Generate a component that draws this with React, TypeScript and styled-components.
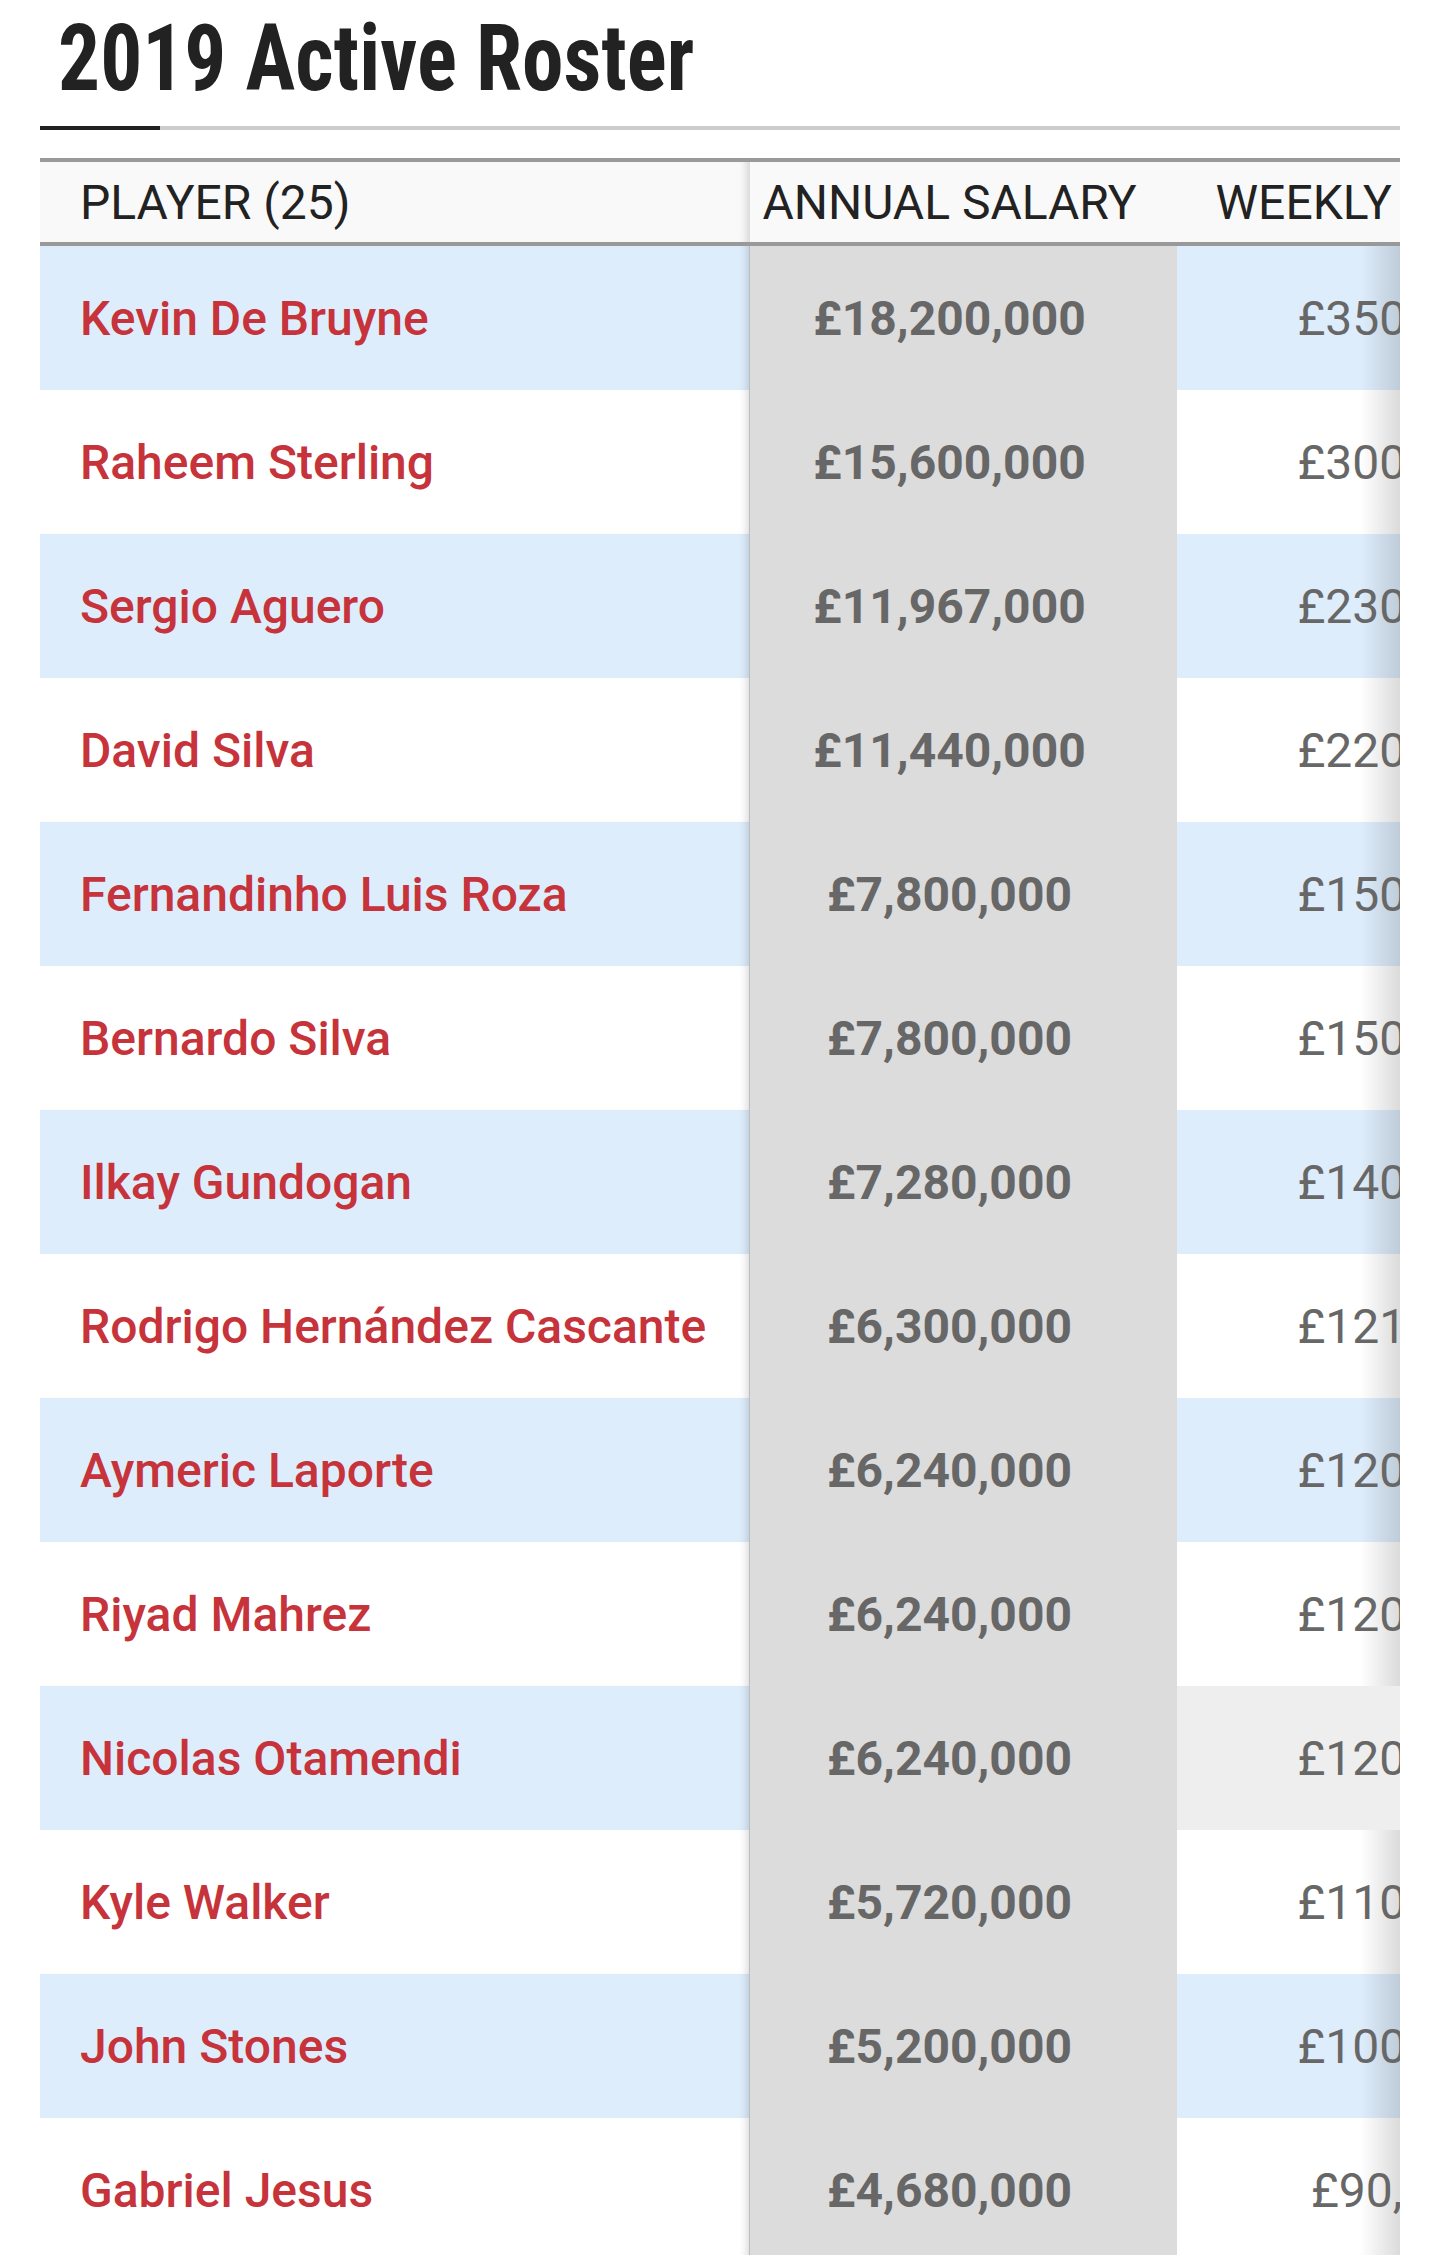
import styled, { createGlobalStyle, css } from "styled-components";

const GlobalStyle = createGlobalStyle`
  body {
    margin: 0;
    background: #fff;
    font-family: Roboto, "Liberation Sans", Arial, sans-serif;
  }
`;

const Page = styled.main`
  padding: 0 40px;
`;

const Title = styled.h1`
  display: inline-block;
  margin: 0;
  padding: 13px 0 0 20px;
  font-size: 92px;
  line-height: 92px;
  font-weight: 700;
  font-stretch: 75%;
  color: #222;
  transform: scaleX(0.905);
  transform-origin: left top;
`;

const TitleRule = styled.div`
  position: relative;
  height: 4px;
  margin-top: 21px;
  width: 1360px;
  background: #ccc;

  &::before {
    content: "";
    position: absolute;
    left: 0;
    top: 0;
    width: 120px;
    height: 4px;
    background: #222;
  }
`;

const TableWrap = styled.div`
  width: 1360px;
  margin-top: 28px;
  border-top: 4px solid #999;
  overflow: hidden;
`;

const Grid = styled.div`
  width: max-content;
`;

const COLUMNS = "709px 428px 468px";

// soft shadow along the right edge of the player column
const edgeShadow = css`
  box-shadow: inset -9px 0 8px -7px rgba(0, 0, 0, 0.16);
`;

const HeadRow = styled.div`
  display: grid;
  grid-template-columns: ${COLUMNS};
  height: 80px;
  background: #f9f9f9;
  border-bottom: 4px solid #999;
`;

const HeadCell = styled.div<{ $align?: "left" | "center"; $sorted?: boolean }>`
  display: flex;
  align-items: center;
  justify-content: ${(p) => (p.$align === "left" ? "flex-start" : "center")};
  padding: ${(p) => (p.$align === "left" ? "0 0 0 40px" : "0 28px 0 0")};
  font-size: 48px;
  font-weight: 400;
  color: #222;
  white-space: nowrap;
  ${(p) => p.$align === "left" && edgeShadow}
  ${(p) =>
    p.$sorted &&
    css`
      border-left: 1px solid #ddd;
    `}
`;

const Row = styled.div<{ $striped: boolean }>`
  display: grid;
  grid-template-columns: ${COLUMNS};
  height: 144px;
  background: ${(p) => (p.$striped ? "#deedfc" : "#fff")};
`;

const NameCell = styled.div`
  display: flex;
  align-items: center;
  padding-left: 40px;
  font-size: 48px;
  font-weight: 500;
  color: #c6333a;
  white-space: nowrap;
  ${edgeShadow}
`;

const SalaryCell = styled.div`
  display: flex;
  align-items: center;
  justify-content: center;
  padding-right: 28px;
  font-size: 48px;
  font-weight: 700;
  color: #676767;
  background: #dcdcdc;
  border-left: 1px solid #b7bec6;
`;

const WeeklyCell = styled.div<{ $hover?: boolean }>`
  display: flex;
  align-items: center;
  justify-content: center;
  padding-right: 28px;
  font-size: 48px;
  font-weight: 400;
  color: #676767;
  white-space: nowrap;
  ${(p) =>
    p.$hover
      ? css`
          background: #eee;
        `
      : css`
          background-image: linear-gradient(
            to right,
            rgba(0, 0, 0, 0) 183px,
            rgba(0, 0, 0, 0.14) 223px,
            rgba(0, 0, 0, 0) 223px
          );
        `}
`;

type Player = { name: string; annual: string; weekly: string };

const players: Player[] = [
  { name: "Kevin De Bruyne", annual: "£18,200,000", weekly: "£350,000" },
  { name: "Raheem Sterling", annual: "£15,600,000", weekly: "£300,000" },
  { name: "Sergio Aguero", annual: "£11,967,000", weekly: "£230,135" },
  { name: "David Silva", annual: "£11,440,000", weekly: "£220,000" },
  { name: "Fernandinho Luis Roza", annual: "£7,800,000", weekly: "£150,000" },
  { name: "Bernardo Silva", annual: "£7,800,000", weekly: "£150,000" },
  { name: "Ilkay Gundogan", annual: "£7,280,000", weekly: "£140,000" },
  { name: "Rodrigo Hernández Cascante", annual: "£6,300,000", weekly: "£121,154" },
  { name: "Aymeric Laporte", annual: "£6,240,000", weekly: "£120,000" },
  { name: "Riyad Mahrez", annual: "£6,240,000", weekly: "£120,000" },
  { name: "Nicolas Otamendi", annual: "£6,240,000", weekly: "£120,000" },
  { name: "Kyle Walker", annual: "£5,720,000", weekly: "£110,000" },
  { name: "John Stones", annual: "£5,200,000", weekly: "£100,000" },
  { name: "Gabriel Jesus", annual: "£4,680,000", weekly: "£90,000" },
];

const HOVERED = 10;

const App = () => {
  return (
    <Page>
      <GlobalStyle />
      <Title>2019 Active Roster</Title>
      <TitleRule />

      <TableWrap>
        <Grid>
          <HeadRow>
            <HeadCell $align="left">PLAYER (25)</HeadCell>
            <HeadCell $sorted>ANNUAL SALARY</HeadCell>
            <HeadCell>WEEKLY SALARY</HeadCell>
          </HeadRow>

          {players.map((p, i) => (
            <Row key={p.name} $striped={i % 2 === 0}>
              <NameCell>{p.name}</NameCell>
              <SalaryCell>{p.annual}</SalaryCell>
              <WeeklyCell $hover={i === HOVERED}>{p.weekly}</WeeklyCell>
            </Row>
          ))}
        </Grid>
      </TableWrap>
    </Page>
  );
};

export default App;
